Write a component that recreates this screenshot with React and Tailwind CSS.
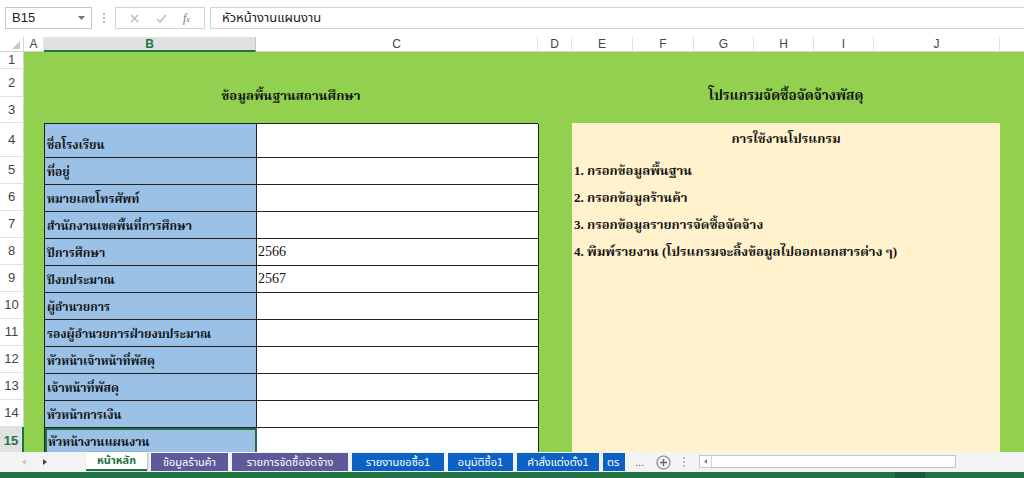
import React from "react";

const FONT_UI = { fontFamily: "'Liberation Sans', 'Noto Sans', 'Noto Sans Thai', Loma, Garuda, sans-serif" };
const FONT_CELL = { fontFamily: "'Liberation Serif', 'Noto Serif Thai', 'Noto Sans Thai', Norasi, Loma, Garuda, serif" };

const headerCols = [
  { l: "A", w: "w-[20px]" },
  { l: "B", w: "w-[212px]", sel: true },
  { l: "C", w: "w-[282px]" },
  { l: "D", w: "w-[34px]" },
  { l: "E", w: "w-[61px]" },
  { l: "F", w: "w-[61px]" },
  { l: "G", w: "w-[60px]" },
  { l: "H", w: "w-[60px]" },
  { l: "I", w: "w-[60px]" },
  { l: "J", w: "w-[126px]" },
];

const rowHeads = [
  { n: 1, h: "h-[17px]" },
  { n: 2, h: "h-[28px]" },
  { n: 3, h: "h-[26px]" },
  { n: 4, h: "h-[34px]" },
  { n: 5, h: "h-[27px]" },
  { n: 6, h: "h-[27px]" },
  { n: 7, h: "h-[27px]" },
  { n: 8, h: "h-[27px]" },
  { n: 9, h: "h-[27px]" },
  { n: 10, h: "h-[27px]" },
  { n: 11, h: "h-[27px]" },
  { n: 12, h: "h-[27px]" },
  { n: 13, h: "h-[27px]" },
  { n: 14, h: "h-[27px]" },
  { n: 15, h: "h-[27px]", sel: true },
];

const rows = [
  ["ชื่อโรงเรียน", ""],
  ["ที่อยู่", ""],
  ["หมายเลขโทรศัพท์", ""],
  ["สำนักงานเขตพื้นที่การศึกษา", ""],
  ["ปีการศึกษา", "2566"],
  ["ปีงบประมาณ", "2567"],
  ["ผู้อำนวยการ", ""],
  ["รองผู้อำนวยการฝ่ายงบประมาณ", ""],
  ["หัวหน้าเจ้าหน้าที่พัสดุ", ""],
  ["เจ้าหน้าที่พัสดุ", ""],
  ["หัวหน้าการเงิน", ""],
  ["หัวหน้างานแผนงาน", ""],
];

const tabs = [
  { t: "ข้อมูลร้านค้า", c: "bg-[#5d5a9c] w-[77px]" },
  { t: "รายการจัดซื้อจัดจ้าง", c: "bg-[#5d5a9c] w-[116px]" },
  { t: "รายงานขอซื้อ1", c: "bg-[#0b62c4] w-[92px]" },
  { t: "อนุมัติซื้อ1", c: "bg-[#0b62c4] w-[65px]" },
  { t: "คำสั่งแต่งตั้ง1", c: "bg-[#0b62c4] w-[82px]" },
];

function FormulaBar() {
  return (
    <div className="h-[37px] bg-white flex items-start pt-[7px] pl-[5px]" style={FONT_UI}>
      <div className="w-[87px] h-[22px] border border-[#c6c6c6] flex items-center justify-between pl-[6px] pr-[6px] text-[13px] text-[#222]">
        <span>B15</span>
        <svg width="7" height="4" viewBox="0 0 7 4"><path d="M0 0h7L3.5 4z" fill="#777" /></svg>
      </div>
      <div className="w-[23px] h-[22px] flex flex-col items-center justify-center gap-[2px]">
        <div className="w-[2px] h-[2px] bg-[#bbb]" />
        <div className="w-[2px] h-[2px] bg-[#bbb]" />
        <div className="w-[2px] h-[2px] bg-[#bbb]" />
      </div>
      <div className="w-[90px] h-[22px] border border-[#d4d4d4] flex items-center justify-around px-[6px] text-[#b0b0b0]">
        <svg width="9" height="9" viewBox="0 0 9 9"><path d="M1 1l7 7M8 1l-7 7" stroke="#b5b5b5" strokeWidth="1.2" /></svg>
        <svg width="11" height="9" viewBox="0 0 11 9"><path d="M1 5l3 3 6-7" stroke="#b5b5b5" strokeWidth="1.2" fill="none" /></svg>
        <span className="italic text-[12px] text-[#777]" style={{ fontFamily: "'Liberation Serif', serif" }}>f<span className="text-[8px]">x</span></span>
      </div>
      <div className="ml-[5px] flex-1 h-[22px] border-y border-l border-[#d4d4d4] flex items-center pl-[11px] text-[13px] text-[#222]">
        หัวหน้างานแผนงาน
      </div>
    </div>
  );
}

function ColumnHeader() {
  return (
    <div className="h-[15px] flex bg-white text-[12px] text-[#444]" style={FONT_UI}>
      <div className="w-[24px] h-full border-r border-b border-[#d4d4d4] flex items-end justify-end pr-[3px] pb-[2px]">
        <svg width="8" height="8" viewBox="0 0 8 8"><path d="M8 0v8H0z" fill="#c8c8c8" /></svg>
      </div>
      {headerCols.map((c) =>
        c.sel ? (
          <div key={c.l} className={`${c.w} h-full bg-[#e1e1e1] border-r border-[#c6c6c6] border-b-2 border-b-[#217346] flex items-center justify-center font-bold text-[#217346]`}>
            {c.l}
          </div>
        ) : (
          <div key={c.l} className={`${c.w} h-full border-r border-b border-[#e1e1e1] border-b-[#d4d4d4] flex items-center justify-center`}>
            {c.l}
          </div>
        )
      )}
      <div className="flex-1 h-full border-b border-[#d4d4d4]" />
    </div>
  );
}

function RowHeaders() {
  return (
    <div className="w-[24px] flex flex-col text-[13px] text-[#444]" style={FONT_UI}>
      {rowHeads.map((r) =>
        r.sel ? (
          <div key={r.n} className={`${r.h} shrink-0 bg-[#e1e1e1] border-r-2 border-[#217346] flex items-center justify-center font-bold text-[#217346]`}>
            {r.n}
          </div>
        ) : (
          <div key={r.n} className={`${r.h} shrink-0 bg-white border-r border-b border-[#e1e1e1] border-r-[#d4d4d4] flex items-center justify-center`}>
            {r.n}
          </div>
        )
      )}
    </div>
  );
}

function Sheet() {
  return (
    <div className="flex-1 bg-[#92d050] grid grid-cols-[20px_212px_282px_34px_61px_61px_60px_60px_60px_126px_1fr] grid-rows-[17px_28px_26px_34px_repeat(11,27px)]" style={FONT_CELL}>
      <div className="col-start-2 col-span-2 row-start-2 row-span-2 flex items-center justify-center text-[13px] font-bold text-[#111]">
        ข้อมูลพื้นฐานสถานศึกษา
      </div>
      <div className="col-start-5 col-span-6 row-start-2 row-span-2 flex items-center justify-center text-[13.5px] font-bold text-[#111]">
        โปรแกรมจัดซื้อจัดจ้างพัสดุ
      </div>

      <div className="col-start-2 col-span-2 row-start-4 row-span-12 grid grid-cols-[212px_282px] grid-rows-[34px_repeat(11,27px)] border-l border-t border-[#222]">
        {rows.map(([label, val], i) => {
          const last = i === rows.length - 1;
          return (
            <React.Fragment key={i}>
              {last ? (
                <div className="bg-[#9bc2e6] border-2 border-[#217346] flex items-end pl-[1px] pb-[2px] text-[12px] font-bold text-[#111]">
                  {label}
                </div>
              ) : (
                <div className="bg-[#9bc2e6] border-r border-b border-[#222] flex items-end pl-[2px] pb-[3px] text-[12px] font-bold text-[#111]">
                  {label}
                </div>
              )}
              <div className="bg-white border-r border-b border-[#222] flex items-end pl-[1px] pb-[3px] text-[14px] text-[#111]">
                {val}
              </div>
            </React.Fragment>
          );
        })}
      </div>

      <div className="col-start-5 col-span-6 row-start-4 row-span-12 bg-[#fff2cc] grid grid-rows-[34px_repeat(11,27px)] text-[13px] font-bold text-[#111]">
        <div className="flex items-center justify-center pb-[2px]">การใช้งานโปรแกรม</div>
        <div className="flex items-center pl-[2px]">1. กรอกข้อมูลพื้นฐาน</div>
        <div className="flex items-center pl-[2px]">2. กรอกข้อมูลร้านค้า</div>
        <div className="flex items-center pl-[2px]">3. กรอกข้อมูลรายการจัดซื้อจัดจ้าง</div>
        <div className="flex items-center pl-[2px]">4. พิมพ์รายงาน (โปรแกรมจะลิ้งข้อมูลไปออกเอกสารต่าง ๆ)</div>
      </div>
    </div>
  );
}

function TabBar() {
  return (
    <div className="h-[20px] bg-[#f3f3f3] flex items-start text-[11px]" style={FONT_UI}>
      <div className="w-[86px] h-full flex items-center pl-[22px] gap-[17px]">
        <svg width="4" height="6" viewBox="0 0 4 6"><path d="M4 0v6L0 3z" fill="#c8c8c8" /></svg>
        <svg width="4" height="6" viewBox="0 0 4 6"><path d="M0 0v6l4-3z" fill="#444" /></svg>
      </div>
      <div className="w-[61px] h-[19px] bg-white border-b-2 border-[#217346] shadow-[1px_0_2px_rgba(0,0,0,0.25)] flex items-center justify-center font-bold text-[#217346]">
        หน้าหลัก
      </div>
      {tabs.map((t, i) => (
        <div key={i} className={`${t.c} h-[18px] mt-[1px] ml-[4px] flex items-center justify-center text-white`}>
          {t.t}
        </div>
      ))}
      <div className="w-[22px] h-[18px] mt-[1px] ml-[4px] bg-[#0b62c4] flex items-center pl-[4px] text-white overflow-hidden">ตร</div>
      <div className="ml-[10px] h-full flex items-center text-[#666]">...</div>
      <div className="ml-[12px] h-full flex items-center">
        <svg width="15" height="15" viewBox="0 0 15 15">
          <circle cx="7.5" cy="7.5" r="6.5" fill="none" stroke="#888" strokeWidth="1.2" />
          <path d="M7.5 4v7M4 7.5h7" stroke="#666" strokeWidth="1.4" />
        </svg>
      </div>
      <div className="ml-[12px] h-full flex flex-col items-center justify-center gap-[2px]">
        <div className="w-[2px] h-[2px] bg-[#bbb]" />
        <div className="w-[2px] h-[2px] bg-[#bbb]" />
        <div className="w-[2px] h-[2px] bg-[#bbb]" />
      </div>
      <div className="ml-[14px] mt-[3px] w-[257px] h-[13px] bg-white border border-[#c6c6c6] flex items-center">
        <div className="w-[12px] h-full border-r border-[#d4d4d4] flex items-center justify-center">
          <svg width="3" height="5" viewBox="0 0 3 5"><path d="M3 0v5L0 2.5z" fill="#888" /></svg>
        </div>
      </div>
    </div>
  );
}

export default function App() {
  return (
    <div className="w-[1024px] h-[478px] overflow-hidden flex flex-col bg-white">
      <FormulaBar />
      <ColumnHeader />
      <div className="h-[400px] flex overflow-hidden">
        <RowHeaders />
        <Sheet />
      </div>
      <TabBar />
      <div className="flex-1 bg-[#217346] flex">
        <div className="ml-[895px] w-[30px] h-full bg-[#1a5c38]" />
      </div>
    </div>
  );
}
